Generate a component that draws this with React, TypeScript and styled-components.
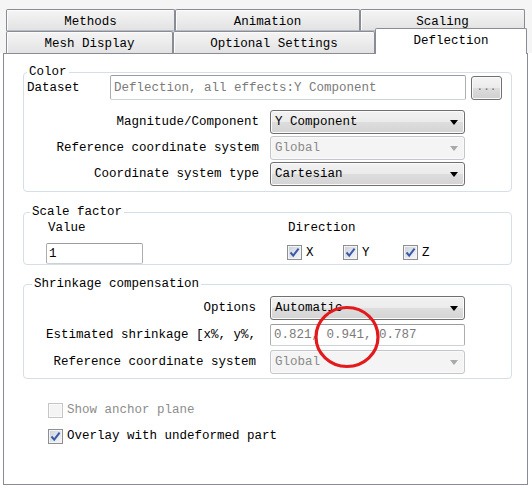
import React from 'react';
import styled, { createGlobalStyle } from 'styled-components';

const GlobalStyle = createGlobalStyle`
  html, body {
    margin: 0;
    padding: 0;
    background: #ffffff;
  }
  body {
    font-family: "Liberation Mono", "DejaVu Sans Mono", monospace;
    font-size: 12.5px;
    color: #000;
  }
`;

const Window = styled.div`
  position: relative;
  box-sizing: border-box;
  width: 532px;
  height: 489px;
  padding: 9px 0 0 3px;
  background: linear-gradient(#f5f5f5 0, #f5f5f5 53px, #ffffff 53px);
`;

const TabRow = styled.div`
  display: flex;
  align-items: flex-start;
  height: 22px;
  margin-left: 3px;
`;

const Tab = styled.div<{ $w: number; $active?: boolean; $top?: boolean }>`
  box-sizing: border-box;
  width: ${p => p.$w}px;
  height: ${p => (p.$active ? 26 : 22)}px;
  margin-top: ${p => (p.$active ? -3 : 0)}px;
  display: flex;
  align-items: center;
  justify-content: center;
  padding-top: ${p => (p.$active ? 0 : 3)}px;
  padding-bottom: ${p => (p.$active ? 2 : 0)}px;
  border: 1px solid #898c95;
  border-bottom: ${p => (p.$top ? '1px solid #b9bcc2' : 'none')};
  border-radius: 2px 2px 0 0;
  background: ${p =>
    p.$active ? '#ffffff' : 'linear-gradient(#f4f4f4 0%, #ececec 50%, #e2e2e2 100%)'};
  box-shadow: ${p => (p.$active ? 'none' : 'inset 1px 1px 0 #fcfcfc')};
  position: relative;
  z-index: ${p => (p.$active ? 2 : 0)};
`;

const Panel = styled.div`
  position: relative;
  z-index: 1;
  box-sizing: border-box;
  width: 525px;
  height: 432px;
  border: 1px solid #898c95;
  background: #ffffff;
  padding: 13px 15px 0 19px;
`;

const Group = styled.fieldset<{ $mt?: number; $pb?: number }>`
  margin: ${p => p.$mt ?? 0}px 0 0 0;
  padding: 0 3px ${p => p.$pb ?? 5}px 3px;
  border: 1px solid #d5dfe5;
  border-radius: 4px;
  min-width: 0;
`;

const Legend = styled.legend<{ $indent: number }>`
  padding: 0 2px;
  margin-left: ${p => p.$indent}px;
  line-height: 10px;
  height: 10px;
`;

const DatasetRow = styled.div`
  display: flex;
  align-items: center;
  margin-top: -2px;
  height: 25px;
`;

const DatasetLabel = styled.span`
  width: 83px;
`;

const TextBox = styled.div<{ $w?: number; $h?: number; $muted?: boolean }>`
  box-sizing: border-box;
  width: ${p => (p.$w ? `${p.$w}px` : 'auto')};
  height: ${p => p.$h ?? 22}px;
  display: flex;
  align-items: center;
  padding-left: ${p => (p.$muted ? 3 : 2)}px;
  border: 1px solid #abadb3;
  border-top-color: #9a9ca4;
  border-bottom-color: #cdd2d8;
  border-radius: 2px;
  background: #ffffff;
  color: ${p => (p.$muted ? '#7b7b7b' : '#000')};
  white-space: nowrap;
  overflow: hidden;
`;

const DotsButton = styled.div`
  box-sizing: border-box;
  width: 31px;
  height: 24px;
  margin-left: 5px;
  display: flex;
  align-items: center;
  justify-content: center;
  padding-bottom: 2px;
  border: 1px solid #707070;
  border-radius: 3px;
  background: linear-gradient(#f4f4f4 0%, #ebebeb 50%, #dddddd 51%, #cfcfcf 100%);
  box-shadow: inset 0 0 0 1px #fafafa;
  color: #6e6e6e;
  font-size: 11px;
`;

const FormGrid = styled.div<{ $mt: number; $gap: number; $pr: number }>`
  display: grid;
  grid-template-columns: 235px 195px;
  column-gap: 8px;
  row-gap: ${p => p.$gap}px;
  margin-top: ${p => p.$mt}px;
  align-items: center;

  & > span {
    text-align: right;
    padding-right: ${p => p.$pr}px;
    white-space: nowrap;
  }
`;

const Combo = styled.div<{ $disabled?: boolean }>`
  box-sizing: border-box;
  height: 24px;
  display: flex;
  align-items: center;
  justify-content: space-between;
  padding: 0 6px 0 4px;
  border: 1px solid ${p => (p.$disabled ? '#c3c6ca' : '#707070')};
  border-radius: 3px;
  background: ${p =>
    p.$disabled
      ? '#f4f4f4'
      : 'linear-gradient(#f2f2f2 0%, #ebebeb 50%, #dddddd 51%, #d4d4d4 100%)'};
  box-shadow: inset 0 0 0 1px ${p => (p.$disabled ? '#f9f9f9' : '#fbfbfb')};
  color: ${p => (p.$disabled ? '#8a8a8a' : '#000')};
`;

const Arrow = styled.span<{ $disabled?: boolean }>`
  width: 0;
  height: 0;
  border-left: 4px solid transparent;
  border-right: 4px solid transparent;
  border-top: 5px solid ${p => (p.$disabled ? '#a9a9a9' : '#000')};
`;

const Columns = styled.div`
  display: flex;
  margin-top: 4px;
  padding-left: 19px;
`;

const Column = styled.div<{ $w?: number }>`
  display: flex;
  flex-direction: column;
  gap: 8px;
  width: ${p => (p.$w ? `${p.$w}px` : 'auto')};
`;

const ColLabel = styled.span`
  line-height: 14px;
  padding-left: 2px;
`;

const CheckRow = styled.div`
  display: flex;
  align-items: center;
  height: 19px;
  padding-left: 1px;
`;

const CheckItem = styled.label<{ $w?: number; $disabled?: boolean }>`
  display: flex;
  align-items: center;
  gap: 4px;
  width: ${p => (p.$w ? `${p.$w}px` : 'auto')};
  color: ${p => (p.$disabled ? '#8d8d8d' : '#000')};
`;

const Box = styled.span<{ $disabled?: boolean }>`
  box-sizing: border-box;
  width: 15px;
  height: 15px;
  display: inline-flex;
  align-items: center;
  justify-content: center;
  border: 1px solid ${p => (p.$disabled ? '#c6c6c6' : '#8e8f8f')};
  background: ${p =>
    p.$disabled ? '#f4f4f4' : 'linear-gradient(135deg, #c9cfd8 0%, #e6e9ee 60%, #f6f7f9 100%)'};
  box-shadow: inset 0 0 0 1px ${p => (p.$disabled ? '#fafafa' : '#f4f4f4')};
`;

const Options = styled.div`
  display: flex;
  flex-direction: column;
  gap: 10px;
  margin-top: 23px;
  padding-left: 25px;
`;

const OptionRow = styled.div`
  height: 16px;
  display: flex;
  align-items: center;
`;

const Highlight = styled.svg`
  position: absolute;
  left: 308px;
  top: 250px;
  overflow: visible;
`;

const Check: React.FC<{ on?: boolean; disabled?: boolean }> = ({ on, disabled }) => (
  <Box $disabled={disabled}>
    {on && (
      <svg width="11" height="11" viewBox="0 0 11 11">
        <path d="M1.5 5.5 L4.2 8.6 L9.6 1.6" fill="none" stroke="#3a5aa8" strokeWidth="2" />
      </svg>
    )}
  </Box>
);

const App: React.FC = () => {
  return (
    <>
      <GlobalStyle />
      <Window>
        <TabRow>
          <Tab $w={169} $top>Methods</Tab>
          <Tab $w={185} $top>Animation</Tab>
          <Tab $w={165} $top>Scaling</Tab>
        </TabRow>
        <TabRow>
          <Tab $w={167}>Mesh Display</Tab>
          <Tab $w={202}>Optional Settings</Tab>
          <Tab $w={152} $active>Deflection</Tab>
        </TabRow>

        <Panel>
          <Group>
            <Legend $indent={0}>Color</Legend>
            <DatasetRow>
              <DatasetLabel>Dataset</DatasetLabel>
              <TextBox $w={356} $h={25} $muted>Deflection, all effects:Y Component</TextBox>
              <DotsButton>...</DotsButton>
            </DatasetRow>
            <FormGrid $mt={10} $gap={2} $pr={3}>
              <span>Magnitude/Component</span>
              <Combo>
                Y Component
                <Arrow />
              </Combo>
              <span>Reference coordinate system</span>
              <Combo $disabled>
                Global
                <Arrow $disabled />
              </Combo>
              <span>Coordinate system type</span>
              <Combo>
                Cartesian
                <Arrow />
              </Combo>
            </FormGrid>
          </Group>

          <Group $mt={15} $pb={0}>
            <Legend $indent={3}>Scale factor</Legend>
            <Columns>
              <Column $w={240}>
                <ColLabel>Value</ColLabel>
                <TextBox $w={97} $h={21}>1</TextBox>
              </Column>
              <Column>
                <ColLabel>Direction</ColLabel>
                <CheckRow>
                  <CheckItem $w={56}>
                    <Check on />X
                  </CheckItem>
                  <CheckItem $w={60}>
                    <Check on />Y
                  </CheckItem>
                  <CheckItem>
                    <Check on />Z
                  </CheckItem>
                </CheckRow>
              </Column>
            </Columns>
          </Group>

          <Group $mt={14} $pb={4}>
            <Legend $indent={5}>Shrinkage compensation</Legend>
            <FormGrid $mt={7} $gap={4} $pr={6}>
              <span>Options</span>
              <Combo>
                Automatic
                <Arrow />
              </Combo>
              <span>Estimated shrinkage [x%, y%,</span>
              <TextBox $h={22} $muted>0.821, 0.941, 0.787</TextBox>
              <span>Reference coordinate system</span>
              <Combo $disabled>
                Global
                <Arrow $disabled />
              </Combo>
            </FormGrid>
          </Group>

          <Options>
            <OptionRow>
              <CheckItem $disabled>
                <Check disabled />Show anchor plane
              </CheckItem>
            </OptionRow>
            <OptionRow>
              <CheckItem>
                <Check on />Overlay with undeformed part
              </CheckItem>
            </OptionRow>
          </Options>

          <Highlight width="70" height="66" viewBox="0 0 70 66">
            <ellipse cx="35" cy="33" rx="31" ry="29.5" fill="none" stroke="#e3191c" strokeWidth="3.2" />
          </Highlight>
        </Panel>
      </Window>
    </>
  );
};

export default App;
